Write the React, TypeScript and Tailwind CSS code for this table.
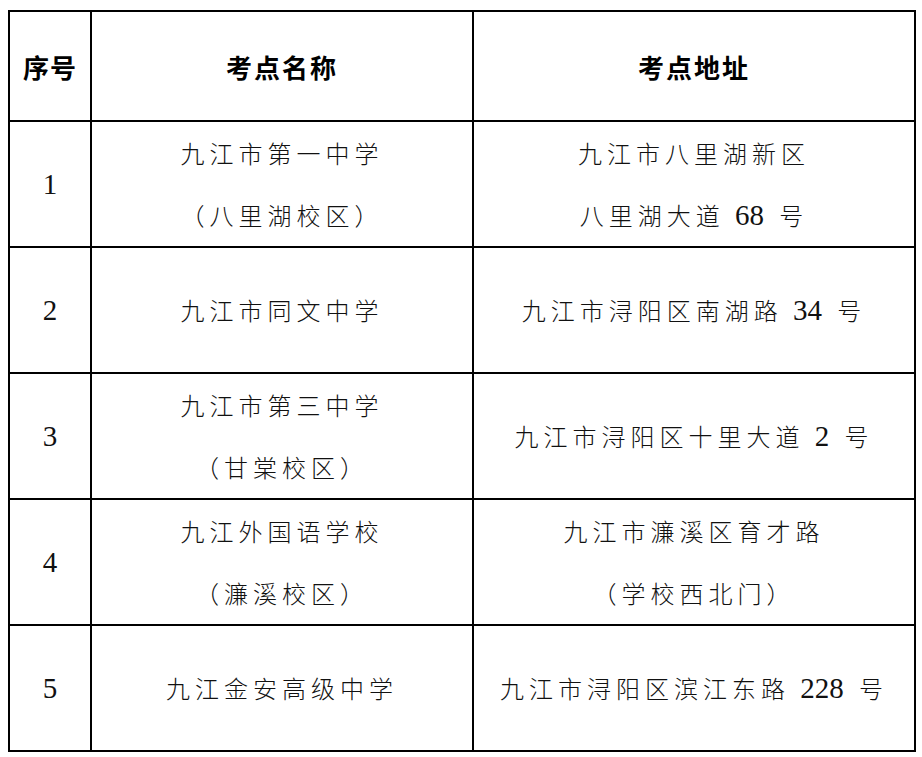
const rows = [
  { no: '1', name: ['九江市第一中学', '（八里湖校区）'], addr: ['九江市八里湖新区', '八里湖大道 68 号'] },
  { no: '2', name: ['九江市同文中学'], addr: ['九江市浔阳区南湖路 34 号'] },
  { no: '3', name: ['九江市第三中学', '（甘棠校区）'], addr: ['九江市浔阳区十里大道 2 号'] },
  { no: '4', name: ['九江外国语学校', '（濂溪校区）'], addr: ['九江市濂溪区育才路', '（学校西北门）'] },
  { no: '5', name: ['九江金安高级中学'], addr: ['九江市浔阳区滨江东路 228 号'] },
];

// digits are set in a bigger serif without letter spacing, like the Word original
function Line({ text }: { text: string }) {
  const parts = text.split(/(\d+)/);
  return (
    <span className="h-[62px] leading-[62px] whitespace-nowrap">
      {parts.map((p, i) =>
        /^\d+$/.test(p) ? (
          <span key={i} className="font-['Liberation_Serif',serif] font-normal text-[29px] leading-none tracking-normal mr-[5px]">
            {p}
          </span>
        ) : (
          <span key={i} className="tracking-[5px]">
            {p}
          </span>
        )
      )}
    </span>
  );
}

function Lines({ lines }: { lines: string[] }) {
  return (
    <div className="flex flex-col items-center">
      {lines.map((l, i) => (
        <Line key={i} text={l} />
      ))}
    </div>
  );
}

export default function App() {
  return (
    <div className="min-h-[757px] w-[922px] bg-white pl-[8px] pt-[10px]">
      <table className="table-fixed border-collapse border-2 border-black text-[#111] font-['Noto_Sans_CJK_SC',sans-serif] font-light text-[24px]">
        <colgroup>
          <col className="w-[82px]" />
          <col className="w-[382px]" />
          <col className="w-[442px]" />
        </colgroup>
        <thead>
          <tr className="h-[110px] font-bold text-[26px] text-black">
            <th className="border-2 border-black text-center tracking-[1px]">序号</th>
            <th className="border-2 border-black text-center tracking-[2px]">考点名称</th>
            <th className="border-2 border-black text-center tracking-[2px]">考点地址</th>
          </tr>
        </thead>
        <tbody>
          {rows.map((r) => (
            <tr key={r.no} className="h-[126px]">
              <td className="border-2 border-black text-center font-['Liberation_Serif',serif] font-normal text-[29px] leading-none">
                {r.no}
              </td>
              <td className="border-2 border-black text-center">
                <Lines lines={r.name} />
              </td>
              <td className="border-2 border-black text-center">
                <Lines lines={r.addr} />
              </td>
            </tr>
          ))}
        </tbody>
      </table>
    </div>
  );
}
